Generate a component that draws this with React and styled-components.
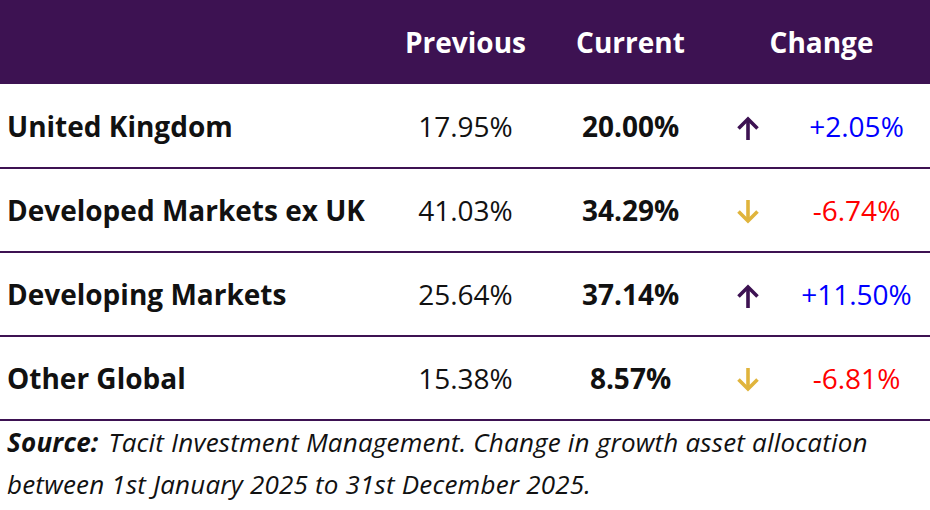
import React from 'react';
import styled, { createGlobalStyle } from 'styled-components';

const GlobalStyle = createGlobalStyle`
  html, body {
    margin: 0;
    padding: 0;
    background: #ffffff;
  }
  body {
    font-family: "Open Sans", "Noto Sans", sans-serif;
    color: #111111;
  }
`;

const Wrapper = styled.div`
  width: 930px;
  height: 510px;
  overflow: hidden;
`;

const Table = styled.table`
  width: 930px;
  border-collapse: collapse;
  table-layout: fixed;
`;

const HeadRow = styled.tr`
  background: #3d1252;
  height: 84px;
`;

const HeadCell = styled.th`
  color: #ffffff;
  font-size: 28px;
  font-weight: 700;
  text-align: center;
  padding: 0;
`;

const Row = styled.tr`
  height: 84px;
  border-bottom: 2px solid #3d1252;
`;

const Label = styled.td`
  font-size: 28px;
  font-weight: 700;
  padding: 0 0 0 7px;
  white-space: nowrap;
`;

const Value = styled.td`
  font-size: 28px;
  font-weight: ${p => (p.bold ? 700 : 400)};
  text-align: center;
  padding: 0;
`;

const ArrowCell = styled.td`
  text-align: center;
  padding: 0;
  vertical-align: middle;
`;

const Delta = styled.td`
  font-size: 28px;
  text-align: center;
  padding: 0;
  color: ${p => (p.up ? '#0000ff' : '#ff0000')};
`;

const Note = styled.p`
  margin: 0;
  padding: 0 0 0 7px;
  font-size: 26px;
  line-height: 42px;
  font-style: italic;
  letter-spacing: 0.2px;
  color: #111111;
`;

const Strong = styled.b`
  font-weight: 700;
  margin-right: 10px;
`;

const Arrow = ({ up }) => (
  <svg width="24" height="24" viewBox="0 0 24 24" style={{ display: 'block', margin: '4px auto 0' }}>
    {up ? (
      <g fill="none" stroke="#3d1252" strokeWidth="3.6">
        <path d="M12 24V3" />
        <path d="M2.5 12.5L12 3l9.5 9.5" />
      </g>
    ) : (
      <g fill="none" stroke="#e0b43c" strokeWidth="3.6">
        <path d="M12 0v21" />
        <path d="M2.5 11.5L12 21l9.5-9.5" />
      </g>
    )}
  </svg>
);

const rows = [
  { name: 'United Kingdom', prev: '17.95%', cur: '20.00%', delta: '+2.05%', up: true },
  { name: 'Developed Markets ex UK', prev: '41.03%', cur: '34.29%', delta: '-6.74%', up: false },
  { name: 'Developing Markets', prev: '25.64%', cur: '37.14%', delta: '+11.50%', up: true },
  { name: 'Other Global', prev: '15.38%', cur: '8.57%', delta: '-6.81%', up: false },
];

export default function App() {
  return (
    <Wrapper>
      <GlobalStyle />
      <Table>
        <colgroup>
          <col style={{ width: 383 }} />
          <col style={{ width: 165 }} />
          <col style={{ width: 165 }} />
          <col style={{ width: 70 }} />
          <col style={{ width: 147 }} />
        </colgroup>
        <thead>
          <HeadRow>
            <HeadCell />
            <HeadCell>Previous</HeadCell>
            <HeadCell>Current</HeadCell>
            <HeadCell colSpan={2}>Change</HeadCell>
          </HeadRow>
        </thead>
        <tbody>
          {rows.map(r => (
            <Row key={r.name}>
              <Label>{r.name}</Label>
              <Value>{r.prev}</Value>
              <Value bold>{r.cur}</Value>
              <ArrowCell>
                <Arrow up={r.up} />
              </ArrowCell>
              <Delta up={r.up}>{r.delta}</Delta>
            </Row>
          ))}
        </tbody>
      </Table>
      <Note>
        <Strong>Source:</Strong>
        Tacit Investment Management. Change in growth asset allocation between 1st January 2025 to 31st December 2025.
      </Note>
    </Wrapper>
  );
}
